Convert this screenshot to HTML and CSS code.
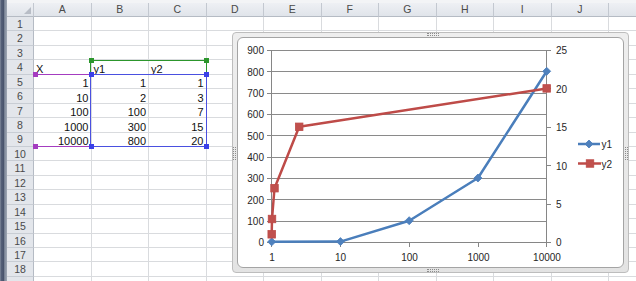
FILE: index.html
```html
<!DOCTYPE html>
<html lang="en">
<head>
    <meta charset="UTF-8">
    <title>Book1</title>
    <link rel="stylesheet" href="styles.css">
</head>
<body>
<div id="window">
    <div class="frame-left"></div>
    <div id="sheet">
        <div class="top-strip"></div>
        <!-- column headers -->
        <div class="row head">
            <span class="corner"></span><span>A</span><span>B</span><span>C</span><span>D</span><span>E</span><span>F</span><span>G</span><span>H</span><span>I</span><span>J</span><span></span>
        </div>
        <div class="row"><span class="rh">1</span><span></span><span></span><span></span><span></span><span></span><span></span><span></span><span></span><span></span><span></span><span></span></div>
        <div class="row"><span class="rh">2</span><span></span><span></span><span></span><span></span><span></span><span></span><span></span><span></span><span></span><span></span><span></span></div>
        <div class="row"><span class="rh">3</span><span></span><span></span><span></span><span></span><span></span><span></span><span></span><span></span><span></span><span></span><span></span></div>
        <div class="row"><span class="rh">4</span><span>X</span><span>y1</span><span>y2</span><span></span><span></span><span></span><span></span><span></span><span></span><span></span><span></span></div>
        <div class="row"><span class="rh">5</span><span class="n">1</span><span class="n">1</span><span class="n">1</span><span></span><span></span><span></span><span></span><span></span><span></span><span></span><span></span></div>
        <div class="row"><span class="rh">6</span><span class="n">10</span><span class="n">2</span><span class="n">3</span><span></span><span></span><span></span><span></span><span></span><span></span><span></span><span></span></div>
        <div class="row"><span class="rh">7</span><span class="n">100</span><span class="n">100</span><span class="n">7</span><span></span><span></span><span></span><span></span><span></span><span></span><span></span><span></span></div>
        <div class="row"><span class="rh">8</span><span class="n">1000</span><span class="n">300</span><span class="n">15</span><span></span><span></span><span></span><span></span><span></span><span></span><span></span><span></span></div>
        <div class="row"><span class="rh">9</span><span class="n">10000</span><span class="n">800</span><span class="n">20</span><span></span><span></span><span></span><span></span><span></span><span></span><span></span><span></span></div>
        <div class="row"><span class="rh">10</span><span></span><span></span><span></span><span></span><span></span><span></span><span></span><span></span><span></span><span></span><span></span></div>
        <div class="row"><span class="rh">11</span><span></span><span></span><span></span><span></span><span></span><span></span><span></span><span></span><span></span><span></span><span></span></div>
        <div class="row"><span class="rh">12</span><span></span><span></span><span></span><span></span><span></span><span></span><span></span><span></span><span></span><span></span><span></span></div>
        <div class="row"><span class="rh">13</span><span></span><span></span><span></span><span></span><span></span><span></span><span></span><span></span><span></span><span></span><span></span></div>
        <div class="row"><span class="rh">14</span><span></span><span></span><span></span><span></span><span></span><span></span><span></span><span></span><span></span><span></span><span></span></div>
        <div class="row"><span class="rh">15</span><span></span><span></span><span></span><span></span><span></span><span></span><span></span><span></span><span></span><span></span><span></span></div>
        <div class="row"><span class="rh">16</span><span></span><span></span><span></span><span></span><span></span><span></span><span></span><span></span><span></span><span></span><span></span></div>
        <div class="row"><span class="rh">17</span><span></span><span></span><span></span><span></span><span></span><span></span><span></span><span></span><span></span><span></span><span></span></div>
        <div class="row"><span class="rh">18</span><span></span><span></span><span></span><span></span><span></span><span></span><span></span><span></span><span></span><span></span><span></span></div>
        <div class="row"><span class="rh"></span><span></span><span></span><span></span><span></span><span></span><span></span><span></span><span></span><span></span><span></span><span></span></div>
    </div>

    <!-- source data highlights of the selected chart -->
    <div class="range range-x">
        <i class="handle tl"></i><i class="handle bl"></i>
    </div>
    <div class="range range-name">
        <i class="handle tl"></i><i class="handle tr"></i>
    </div>
    <div class="range range-y">
        <i class="handle tl"></i><i class="handle tr"></i><i class="handle bl"></i><i class="handle br"></i>
    </div>

    <!-- chart object -->
    <div id="chart">
        <i class="grip grip-top"></i>
        <i class="grip grip-bottom"></i>
        <i class="grip grip-left"></i>
        <i class="grip grip-right"></i>
        <div class="chart-area">
            <svg width="385" height="229" viewBox="238 38 385 229">
                <defs>
                    <path id="dia" d="M0 -4L4 0L0 4L-4 0Z"/>
                    <rect id="sq" x="-3.75" y="-3.75" width="7.5" height="7.5"/>
                </defs>
                <!-- gridlines + axes -->
                <path class="grid" d="M272 50.5H547M272 71.5H547M272 93.5H547M272 114.5H547M272 135.5H547M272 157.5H547M272 178.5H547M272 199.5H547M272 221.5H547"/>
                <path class="axis" d="M271.5 50V243M546.5 50V243M271 242.5H547"/>
                <path class="axis" d="M267 50.5H272M267 71.5H272M267 93.5H272M267 114.5H272M267 135.5H272M267 157.5H272M267 178.5H272M267 199.5H272M267 221.5H272M267 242.5H272"/>
                <path class="axis" d="M547 50.5H551M547 88.5H551M547 127.5H551M547 165.5H551M547 204.5H551M547 242.5H551"/>
                <path class="axis" d="M271.5 242V247M340.5 242V247M409.5 242V247M478.5 242V247M546.5 242V247"/>

                <g class="labels">
                    <text x="264" y="54" text-anchor="end">900</text>
                    <text x="264" y="75.5" text-anchor="end">800</text>
                    <text x="264" y="97" text-anchor="end">700</text>
                    <text x="264" y="118" text-anchor="end">600</text>
                    <text x="264" y="139.5" text-anchor="end">500</text>
                    <text x="264" y="161" text-anchor="end">400</text>
                    <text x="264" y="182" text-anchor="end">300</text>
                    <text x="264" y="203.5" text-anchor="end">200</text>
                    <text x="264" y="225" text-anchor="end">100</text>
                    <text x="264" y="246" text-anchor="end">0</text>

                    <text x="556" y="54">25</text>
                    <text x="556" y="92.5">20</text>
                    <text x="556" y="131">15</text>
                    <text x="556" y="169.5">10</text>
                    <text x="556" y="207.5">5</text>
                    <text x="556" y="246">0</text>

                    <text x="272" y="261" text-anchor="middle">1</text>
                    <text x="340.5" y="261" text-anchor="middle">10</text>
                    <text x="409.5" y="261" text-anchor="middle">100</text>
                    <text x="478.5" y="261" text-anchor="middle">1000</text>
                    <text x="547" y="261" text-anchor="middle">10000</text>
                </g>

                <!-- y1 : primary axis, log x -->
                <g class="s1">
                    <polyline points="271.7,241.8 340.45,241.6 409.2,220.7 477.95,178 546.7,71.3"/>
                    <use href="#dia" x="271.7" y="241.8"/>
                    <use href="#dia" x="340.45" y="241.6"/>
                    <use href="#dia" x="409.2" y="220.7"/>
                    <use href="#dia" x="477.95" y="178"/>
                    <use href="#dia" x="546.7" y="71.3"/>
                </g>
                <!-- y2 : secondary axis, linear x -->
                <g class="s2">
                    <polyline points="271.7,234.3 272,219 274.5,188.2 299.2,126.8 546.7,88.4"/>
                    <use href="#sq" x="271.7" y="234.3"/>
                    <use href="#sq" x="272" y="219"/>
                    <use href="#sq" x="274.5" y="188.2"/>
                    <use href="#sq" x="299.2" y="126.8"/>
                    <use href="#sq" x="546.7" y="88.4"/>
                </g>

                <!-- legend -->
                <g class="s1">
                    <polyline points="578,144 600,144"/>
                    <use href="#dia" x="589" y="144"/>
                </g>
                <g class="s2">
                    <polyline points="578,163.5 601,163.5"/>
                    <use href="#sq" x="590" y="163.5"/>
                </g>
                <g class="labels">
                    <text x="601.5" y="148">y1</text>
                    <text x="601.5" y="167.5">y2</text>
                </g>
            </svg>
        </div>
    </div>
</div>
</body>
</html>
```

FILE: styles.css
```css
*{
    margin: 0;
    padding: 0;
    box-sizing: border-box;
}
body{
    width: 636px;
    height: 281px;
    overflow: hidden;
    background: #fff;
    font-family: "Liberation Sans", Arial, sans-serif;
}
#window{
    position: relative;
    display: flex;
    height: 281px;
}
.frame-left{
    flex: 0 0 7px;
    background: linear-gradient(to right, #8c96a5 0, #56617a 1px, #47526a 4px, #a8b1be 5px, #6d788a 6px, #c4cad3 7px);
}
#sheet{
    flex: 1;
    overflow: hidden;
}
.top-strip{
    height: 3px;
    background: #f3f4f6;
}
.row{
    display: grid;
    grid-template-columns: 27px repeat(11, 57.5px);
    height: 14.44px;
}
.row span{
    display: flex;
    align-items: flex-end;
    padding: 0 2px;
    border-right: 1px solid #d9dbde;
    border-bottom: 1px solid #d9dbde;
    font-size: 11px;
    line-height: 10px;
    color: #111;
    white-space: nowrap;
    overflow: hidden;
}
.row span.n{
    justify-content: flex-end;
}
/* column header */
.head{
    height: 14px;
}
.head span{
    align-items: center;
    justify-content: center;
    background: linear-gradient(#eef0f4, #e0e4ea);
    border-right-color: #c3c8d0;
    border-bottom-color: #b5bbc4;
    font-size: 10.5px;
    line-height: 1;
    color: #4a4a4a;
}
.head .corner{
    align-items: flex-end;
    justify-content: flex-end;
    padding: 2px;
}
.head .corner::after{
    content: "";
    border-left: 7px solid transparent;
    border-bottom: 7px solid #b8bdc6;
}
/* row header */
.row .rh{
    align-items: center;
    justify-content: center;
    padding-top: 1px;
    background: #e3e6eb;
    border-right-color: #b5bbc4;
    border-bottom-color: #c8cdd4;
    font-size: 10.5px;
    line-height: 1;
    color: #4a4a4a;
}

/* ranges highlighted when the chart is selected */
.range{
    position: absolute;
}
.range-x{
    left: 34px;
    top: 74px;
    width: 57px;
    height: 73px;
    border-top: 1px solid #a43cc0;
    border-bottom: 1px solid #a43cc0;
}
.range-name{
    left: 90px;
    top: 60px;
    width: 117px;
    height: 15px;
    border: 1px solid #2c962c;
}
.range-y{
    left: 90px;
    top: 74px;
    width: 117px;
    height: 73px;
    border: 1px solid #4a50e0;
}
.handle{
    position: absolute;
    width: 5px;
    height: 5px;
}
.range-x .handle{ background: #a43cc0; }
.range-name .handle{ background: #2c962c; }
.range-y .handle{ background: #3a40e8; }
.handle.tl{ left: -2px; top: -3px; }
.handle.tr{ right: -3px; top: -3px; }
.handle.bl{ left: -2px; bottom: -3px; }
.handle.br{ right: -3px; bottom: -3px; }
.range-x .handle.tl, .range-x .handle.bl{ left: -1px; }

/* chart */
#chart{
    position: absolute;
    left: 232px;
    top: 32px;
    width: 397px;
    height: 241px;
    padding: 4px;
    border: 1px solid #bdbdbd;
    border-radius: 4px;
    background: linear-gradient(#eeeeee, #e3e3e3);
}
.chart-area{
    height: 100%;
    border: 1px solid #a4a4a4;
    border-radius: 6px;
    background: #fff;
    overflow: hidden;
}
.chart-area svg{
    display: block;
}
.grip{
    position: absolute;
}
.grip-top, .grip-bottom{
    left: 194px;
    width: 12px;
    height: 3px;
    border-top: 1px dotted #8c8c8c;
    border-bottom: 1px dotted #8c8c8c;
}
.grip-top{ top: 0; }
.grip-bottom{ bottom: 0; }
.grip-left, .grip-right{
    top: 114px;
    width: 3px;
    height: 13px;
    border-left: 1px dotted #8c8c8c;
    border-right: 1px dotted #8c8c8c;
}
.grip-left{ left: 0; }
.grip-right{ right: 0; }

.grid{
    fill: none;
    stroke: #8a8a8a;
    stroke-width: 1;
    shape-rendering: crispEdges;
}
.axis{
    fill: none;
    stroke: #868686;
    stroke-width: 1;
    shape-rendering: crispEdges;
}
.labels text{
    font-family: "Liberation Sans", Arial, sans-serif;
    font-size: 10px;
    fill: #262626;
}
.s1 polyline, .s2 polyline{
    fill: none;
    stroke-width: 2.5;
    stroke-linejoin: round;
}
.s1 polyline{ stroke: #4a7ebb; }
.s2 polyline{ stroke: #be4b48; }
.s1 use{
    fill: #4f81bd;
    stroke: #4a7ebb;
    stroke-width: 0.8;
}
.s2 use{
    fill: #c0504d;
    stroke: #be4b48;
    stroke-width: 0.8;
}
```
